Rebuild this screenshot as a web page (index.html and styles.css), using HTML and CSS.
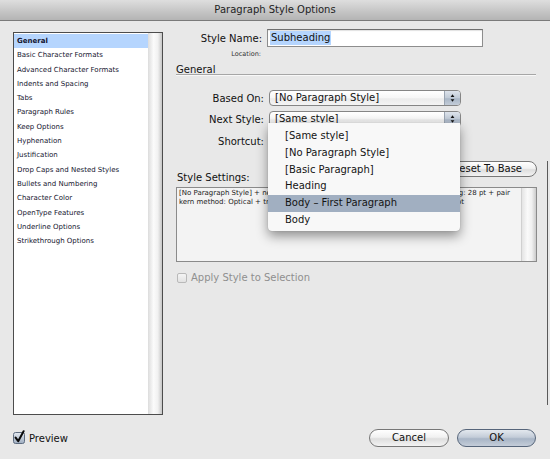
FILE: index.html
```html
<!DOCTYPE html>
<html>
<head>
<meta charset="utf-8">
<title>Paragraph Style Options</title>
<link rel="stylesheet" href="styles.css">
</head>
<body>
<div class="dialog">
  <div class="titlebar">Paragraph Style Options</div>
  <div class="main">
    <div class="catlist">
      <ul class="items">
        <li class="sel">General</li>
        <li>Basic Character Formats</li>
        <li>Advanced Character Formats</li>
        <li>Indents and Spacing</li>
        <li>Tabs</li>
        <li>Paragraph Rules</li>
        <li>Keep Options</li>
        <li>Hyphenation</li>
        <li>Justification</li>
        <li>Drop Caps and Nested Styles</li>
        <li>Bullets and Numbering</li>
        <li>Character Color</li>
        <li>OpenType Features</li>
        <li>Underline Options</li>
        <li>Strikethrough Options</li>
      </ul>
      <div class="track"></div>
    </div>

    <div class="panel">
      <div class="frow r-name">
        <span class="lbl name-lbl">Style Name:</span>
        <div class="textfield name"><span class="hl">Subheading</span></div>
      </div>
      <div class="frow r-loc">
        <span class="lbl loc-lbl">Location:</span>
        <span></span>
      </div>
      <div class="section">General</div>

      <div class="frow r-based">
        <span class="lbl">Based On:</span>
        <div class="popup">
          <span class="pv">[No Paragraph Style]</span>
          <span class="arrows"><svg width="16" height="16" viewBox="0 0 16 16"><polygon points="6,6.8 8,4 10,6.8" fill="#111"/><polygon points="6,9.2 8,12 10,9.2" fill="#111"/></svg></span>
        </div>
      </div>
      <div class="frow r-next">
        <span class="lbl">Next Style:</span>
        <div class="popup">
          <span class="pv">[Same style]</span>
          <span class="arrows"><svg width="16" height="16" viewBox="0 0 16 16"><polygon points="6,6.8 8,4 10,6.8" fill="#111"/><polygon points="6,9.2 8,12 10,9.2" fill="#111"/></svg></span>
        </div>
      </div>
      <div class="frow r-short">
        <span class="lbl">Shortcut:</span>
        <div class="textfield shortcut"></div>
      </div>

      <div class="lower">
        <div class="reset-row">
          <span class="settings-lbl">Style Settings:</span>
          <button class="pill reset">Reset To Base</button>
        </div>
        <div class="settings">
          <div class="stext">
            <div class="sline l1"><span>[No Paragraph Style] + next: [Same style] + Myriad Pro</span><span>+ leading: 28 pt + pair</span></div>
            <div class="sline l2"><span>kern method: Optical + tracking: 10</span><span>+ space after: 6 pt</span></div>
          </div>
          <div class="strack"></div>
        </div>
        <div class="apply">
          <span class="cb"></span>
          <span>Apply Style to Selection</span>
        </div>
      </div>

      <ul class="menu">
        <li>[Same style]</li>
        <li>[No Paragraph Style]</li>
        <li>[Basic Paragraph]</li>
        <li>Heading</li>
        <li class="hot">Body – First Paragraph</li>
        <li>Body</li>
      </ul>
    </div>
  </div>

  <div class="footer">
    <div class="preview">
      <svg class="pcb" width="13" height="14" viewBox="0 0 13 14">
        <defs><linearGradient id="cbg" x1="0" y1="0" x2="0" y2="1"><stop offset="0" stop-color="#e4e9f0"/><stop offset="1" stop-color="#9eadc0"/></linearGradient></defs>
        <rect x="0.5" y="2.5" width="11" height="11" rx="2" fill="url(#cbg)" stroke="#5f6d80"/>
        <path d="M2.6 7.6 L5.2 11.2 L10.6 1.2" fill="none" stroke="#0a0a0a" stroke-width="2" stroke-linecap="round" stroke-linejoin="round"/>
      </svg>
      <span>Preview</span>
    </div>
    <div class="buttons">
      <button class="pill cancel">Cancel</button>
      <button class="pill ok">OK</button>
    </div>
  </div>
</div>
</body>
</html>
```

FILE: styles.css
```css
* { box-sizing: border-box; margin: 0; padding: 0; }
html, body { width: 550px; height: 459px; overflow: hidden; }
body {
  font-family: "DejaVu Sans", "Liberation Sans", sans-serif;
  font-size: 10px;
  color: #111;
  background: #e8e8e8;
}
.dialog {
  width: 550px;
  height: 459px;
  display: flex;
  flex-direction: column;
  background: #e8e8e8;
}
.titlebar {
  height: 21px;
  border-bottom: 1px solid #7a7a7a;
  background: linear-gradient(#dedede, #c4c4c4 60%, #b4b4b4);
  text-align: center;
  line-height: 20px;
  font-size: 10px;
  color: #1e1e1e;
}
.main {
  height: 396px;
  display: flex;
}

/* category list */
.catlist {
  width: 150px;
  height: 383px;
  margin: 11px 0 0 13px;
  border: 1px solid #4c4c4c;
  background: #fff;
  display: flex;
}
.items {
  list-style: none;
  flex: 1;
  padding-top: 1px;
}
.items li {
  height: 14.3px;
  line-height: 14.3px;
  padding-left: 3px;
  font-size: 7px;
  color: #14142e;
  white-space: nowrap;
}
.items li.sel {
  background: #b5d5fe;
  font-weight: bold;
}
.track {
  width: 14px;
  background: linear-gradient(to right, #dcdcdc, #fbfbfb 40%, #f1f1f1 70%, #c6c6c6);
}

/* right panel */
.panel {
  position: relative;
  flex: 1;
  padding: 8px 0 0 13px;
  display: flex;
  flex-direction: column;
}
.frow {
  display: grid;
  grid-template-columns: 88px auto;
  column-gap: 4px;
  align-items: center;
  margin-right: 13px;
}
.lbl {
  text-align: right;
  white-space: nowrap;
}
.r-name { height: 18px; }
.name-lbl { padding-right: 2px; }
.textfield {
  height: 18px;
  background: #fff;
  border: 1px solid #8d8d8d;
  border-top-color: #6f6f6f;
  box-shadow: inset 0 1px 1px rgba(0,0,0,0.12);
}
.textfield.name {
  width: 216px;
  margin-left: -1px;
  padding: 1px 0 0 2px;
  line-height: 14px;
  font-size: 10px;
}
.hl { background: #b5d5fe; display: inline-block; padding: 0 1px; }
.r-loc { height: 8px; margin-top: 3px; }
.loc-lbl { font-size: 6.5px; line-height: 8px; color: #333; padding-right: 3px; }
.section {
  margin-top: 7px;
  margin-right: 14px;
  height: 10px;
  line-height: 9px;
  border-bottom: 1px solid #a6a6a6;
  box-shadow: 0 1px 0 #f8f8f8;
}
.r-based { margin-top: 15px; height: 16px; }
.r-next { margin-top: 5px; height: 16px; }
.r-short { margin-top: 6px; height: 16px; }
.popup {
  width: 192px;
  height: 16px;
  margin-left: 1px;
  display: flex;
  border: 1px solid #858585;
  border-radius: 4px;
  overflow: hidden;
  background: linear-gradient(#ffffff, #f6f6f6 50%, #ebebeb 55%, #f4f4f4);
}
.pv {
  flex: 1;
  padding-left: 5px;
  line-height: 14px;
  white-space: nowrap;
}
.arrows {
  width: 16px;
  border-left: 1px solid #9aa4b1;
  background: linear-gradient(#dde3eb, #c0cad6 50%, #a9b6c6 55%, #c3ccd8);
  display: flex;
  align-items: center;
  justify-content: center;
}
.arrows svg { display: block; margin-top: -1px; }
.textfield.shortcut { width: 120px; height: 16px; }

/* lower part */
.lower {
  margin-top: 12px;
  margin-right: 2px;
  margin-bottom: 12px;
  padding-right: 10px;
  flex: 1;
  border-right: 1px solid #5a5a5a;
}
.reset-row {
  height: 23px;
  display: flex;
  justify-content: space-between;
  align-items: flex-start;
}
.settings-lbl {
  align-self: flex-end;
  line-height: 12px;
  padding-left: 1px;
}
.pill {
  font-family: "DejaVu Sans", "Liberation Sans", sans-serif;
  font-size: 10px;
  color: #111;
  border: 1px solid #777;
  background: linear-gradient(#ffffff, #f1f1f1 45%, #dedede 55%, #f3f3f3);
  cursor: default;
}
.reset {
  width: 109px;
  height: 16px;
  border-radius: 8px;
  line-height: 14px;
  text-align: right;
  padding-right: 14px;
  white-space: nowrap;
}
.settings {
  margin-top: 3px;
  height: 75px;
  border: 1px solid #8a8a8a;
  background: #f3f3f3;
  display: flex;
}
.stext {
  flex: 1;
  padding: 1px 0 0 2px;
  font-size: 7px;
  line-height: 9px;
  color: #222;
}
.sline {
  display: flex;
  justify-content: space-between;
  white-space: nowrap;
}
.l1 { padding-right: 11px; }
.l2 { width: 285px; }
.strack {
  width: 15px;
  border-left: 1px solid #d0d0d0;
  background: linear-gradient(to right, #e4e4e4, #fafafa 40%, #f0f0f0 70%, #cbcbcb);
}
.apply {
  margin-top: 10.7px;
  height: 10px;
  display: flex;
  align-items: center;
  gap: 4px;
  color: #8f8f8f;
}
.cb {
  width: 10px;
  height: 10px;
  border: 1px solid #b9b9b9;
  border-radius: 2px;
  background: linear-gradient(#f4f4f4, #e2e2e2);
  margin-left: 1px;
}

/* dropdown menu */
.menu {
  position: absolute;
  left: 105px;
  top: 102px;
  width: 192px;
  list-style: none;
  padding: 5px 0 2px;
  background: #f8f8f8;
  border-radius: 0 0 4px 4px;
  box-shadow: 0 5px 12px rgba(0,0,0,0.42), 0 0 1px rgba(0,0,0,0.3);
}
.menu li {
  height: 16.8px;
  line-height: 16.8px;
  padding-left: 17px;
  font-size: 10px;
  color: #141414;
  white-space: nowrap;
}
.menu li.hot {
  background: #a1afc1;
}

/* footer */
.footer {
  height: 42px;
  display: flex;
  align-items: center;
  justify-content: space-between;
  padding: 0 14px 0 13px;
}
.preview {
  display: flex;
  align-items: center;
  gap: 3px;
}
.pcb { display: block; margin-top: -3px; }
.buttons {
  display: flex;
  gap: 8px;
}
.cancel, .ok {
  height: 18px;
  border-radius: 9px;
  line-height: 16px;
}
.cancel { width: 80px; }
.ok {
  width: 79px;
  border-color: #56657a;
  background: linear-gradient(#e3e8ee, #c3ccd8 45%, #a8b5c6 55%, #c4cdd9);
}
```
